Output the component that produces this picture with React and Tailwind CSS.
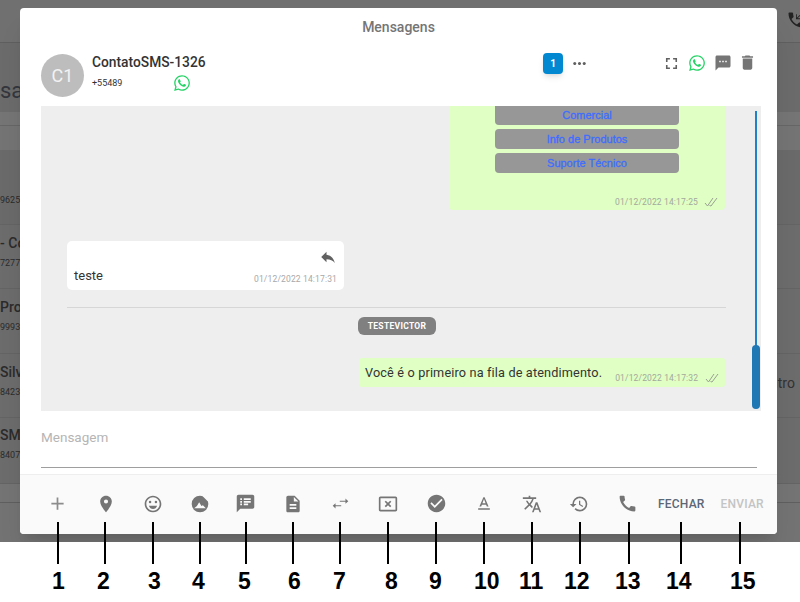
import { FaWhatsapp } from 'react-icons/fa'
import {
  MdAdd, MdLocationOn, MdOutlineEmojiEmotions, MdSpeakerNotes, MdDescription, MdOutlineCancelPresentation,
  MdCheckCircle, MdTextFormat, MdTranslate, MdRestore, MdCall, MdFullscreen, MdMoreHoriz, MdSms, MdDelete, MdReply, MdPhoneCallback,
} from 'react-icons/md'

const font = "font-['Roboto',sans-serif]"

function DriveIcon() {
  return (
    <svg viewBox="0 0 24 24" width="20" height="20">
      <circle cx="12" cy="12" r="10" fill="currentColor" />
      <path d="M5 17h14l-3.5-3.6-1.8 1-2.7-4.4-2.7 4.4z" fill="#fafafa" />
      <path d="M14 1.5 23 10.5V1.5z" fill="#fafafa" />
    </svg>
  )
}

function SwapIcon() {
  return (
    <svg viewBox="0 0 24 24" width="17" height="17" fill="currentColor">
      <path d="M11 8h8V5l4 3.7-4 3.7V9.4h-8zM13 14.6H5v-3L1 15.3 5 19v-3h8z" />
    </svg>
  )
}

function Ticks() {
  return (
    <svg viewBox="0 0 14 10" width="14" height="10" fill="none" stroke="#9aa092" strokeWidth="1" className="shrink-0">
      <path d="M1 6l2.5 3L9 1M5.5 8.5 7 9 13 1" />
    </svg>
  )
}

const tools = [
  { w: 'w-[49px]', icon: <MdAdd size={21} className="text-[#8c8c8c]" /> },
  { w: 'w-[47px]', icon: <MdLocationOn size={20} /> },
  { w: 'w-[48px]', icon: <MdOutlineEmojiEmotions size={20} /> },
  { w: 'w-[46px]', icon: <DriveIcon /> },
  { w: 'w-[45px]', icon: <MdSpeakerNotes size={21} /> },
  { w: 'w-[50px]', icon: <MdDescription size={20} /> },
  { w: 'w-[45px]', icon: <SwapIcon /> },
  { w: 'w-[50px]', icon: <MdOutlineCancelPresentation size={20} /> },
  { w: 'w-[46px]', icon: <MdCheckCircle size={21} /> },
  { w: 'w-[50px]', icon: <MdTextFormat size={20} /> },
  { w: 'w-[46px]', icon: <MdTranslate size={20} /> },
  { w: 'w-[48px]', icon: <MdRestore size={20} /> },
  { w: 'w-[48px]', icon: <MdCall size={21} /> },
]

const marks = [
  { label: '1', line: 'left-[57px]', text: 'left-[52px]' },
  { label: '2', line: 'left-[104px]', text: 'left-[97px]' },
  { label: '3', line: 'left-[152px]', text: 'left-[148px]' },
  { label: '4', line: 'left-[199px]', text: 'left-[192px]' },
  { label: '5', line: 'left-[245px]', text: 'left-[238px]' },
  { label: '6', line: 'left-[292px]', text: 'left-[288px]' },
  { label: '7', line: 'left-[339px]', text: 'left-[333px]' },
  { label: '8', line: 'left-[387px]', text: 'left-[385px]' },
  { label: '9', line: 'left-[435px]', text: 'left-[429px]' },
  { label: '10', line: 'left-[483px]', text: 'left-[474px]' },
  { label: '11', line: 'left-[531px]', text: 'left-[519px]' },
  { label: '12', line: 'left-[579px]', text: 'left-[564px]' },
  { label: '13', line: 'left-[628px]', text: 'left-[615px]' },
  { label: '14', line: 'left-[680px]', text: 'left-[666px]' },
  { label: '15', line: 'left-[739px]', text: 'left-[730px]' },
]

const behind = [
  { top: 'top-[172px]', h: '', s: '96254' },
  { top: 'top-[235px]', h: '- Co', s: '72776' },
  { top: 'top-[299px]', h: 'Pro', s: '99936' },
  { top: 'top-[364px]', h: 'Silv', s: '84237' },
  { top: 'top-[427px]', h: 'SMS', s: '84076' },
]

const bands = [
  { h: 'h-[42px]', c: 'bg-[#707070] border-[#5f5f5f]' },
  { h: 'h-[68px]', c: 'bg-[#6b6b6b] border-[#6b6b6b]' },
  { h: 'h-[13px]', c: 'bg-[#757575] border-[#666666]' },
  { h: 'h-[24px]', c: 'bg-[#747474] border-[#6a6a6a]' },
  { h: 'h-[73px]', c: 'bg-[#6a6a6a] border-[#646464]' },
  { h: 'h-[63px]', c: 'bg-[#6c6c6c] border-[#646464]' },
  { h: 'h-[64px]', c: 'bg-[#6c6c6c] border-[#646464]' },
  { h: 'h-[63px]', c: 'bg-[#6c6c6c] border-[#646464]' },
  { h: 'h-[65px]', c: 'bg-[#6c6c6c] border-[#646464]' },
  { h: 'h-[18px]', c: 'bg-[#747474] border-[#5f5f5f]' },
]

const optionText = "text-[11px] font-['Liberation_Sans',sans-serif] [-webkit-text-stroke:0.3px_#3d6dff] text-[#3d6dff]"

export default function App() {
  return (
    <div className={`relative w-[800px] h-[602px] overflow-hidden bg-white ${font}`}>
      {/* backdrop */}
      <div className="relative h-[542px] bg-[#737373] overflow-hidden">
        {bands.map((b, i) => (
          <div key={i} className={`${b.h} ${b.c} border-b box-content`} />
        ))}
        <div className="absolute top-[74px] left-0 text-[22px] text-[#33363c]">sa</div>
        {behind.map((b) => (
          <div key={b.s} className={`absolute left-0 ${b.top} w-[20px]`}>
            <div className="text-[14px] leading-[16px] font-medium text-[#2b2b2b] whitespace-nowrap h-[16px]">{b.h}</div>
            <div className="text-[9px] leading-[12px] mt-[6px] text-[#2b2b2b] whitespace-nowrap">{b.s}</div>
          </div>
        ))}
        <div className="absolute top-[373px] left-[770px] text-[14px] text-[#333] whitespace-nowrap">ntro</div>
        <MdPhoneCallback size={20} className="absolute top-[10px] left-[786px] text-[#222]" />

        {/* modal */}
        <div className="absolute left-[20px] top-[8px] w-[757px] h-[526px] bg-white rounded-[4px] shadow-xl flex flex-col">
          <div className="h-[38px] shrink-0 pt-[11px] text-center text-[14px] leading-[16px] font-medium text-[#757575]">Mensagens</div>

          <div className="h-[60px] shrink-0 flex items-start pl-[21px]">
            <div className="w-[43px] h-[43px] shrink-0 mt-[8px] rounded-full bg-[#bdbdbd] flex items-center justify-center text-[#f2f2f2] text-[18px]">C1</div>
            <div className="ml-[8px] mt-[7px] w-[140px] shrink-0">
              <div className="text-[13.8px] leading-[18px] font-medium text-[#333] whitespace-nowrap">ContatoSMS-1326</div>
              <div className="flex items-center h-[24px]">
                <span className="mt-[2px] text-[9px] text-[#333] w-[81px] shrink-0">+55489</span>
                <FaWhatsapp size={18} className="shrink-0 text-[#25d366]" />
              </div>
            </div>
            <div className="ml-[311px] mt-[7px] w-[20px] h-[21px] shrink-0 rounded-[4px] bg-[#0288d1] shadow-md text-white text-[10px] font-bold flex items-center justify-center">1</div>
            <MdMoreHoriz size={19} className="shrink-0 ml-[7px] mt-[8px] text-[#616161]" />
            <MdFullscreen size={19} className="shrink-0 ml-[73px] mt-[8px] text-[#616161]" />
            <FaWhatsapp size={18} className="shrink-0 ml-[7px] mt-[8px] text-[#25d366]" />
            <MdSms size={18} className="shrink-0 ml-[8px] mt-[8px] text-[#757575]" />
            <MdDelete size={19} className="shrink-0 ml-[6px] mt-[7px] text-[#757575]" />
          </div>

          {/* messages */}
          <div className="relative shrink-0 mx-[21px] w-[720px] h-[305px] bg-[#eeeeee] overflow-hidden flex flex-col pl-[26px]">
            <div className="ml-[382px] w-[276px] h-[104px] shrink-0 bg-[#dfffc4] rounded-b-[4px] flex flex-col items-center">
              <div className={`w-[184px] h-[19px] shrink-0 rounded-b-[4px] bg-[#979797] ${optionText} flex items-center justify-center`}>Comercial</div>
              <div className={`w-[184px] h-[20px] shrink-0 mt-[4px] rounded-[4px] bg-[#979797] ${optionText} flex items-center justify-center`}>Info de Produtos</div>
              <div className={`w-[184px] h-[20px] shrink-0 mt-[4px] rounded-[4px] bg-[#979797] ${optionText} flex items-center justify-center`}>Suporte Técnico</div>
              <div className="self-end flex items-center mt-[23px] pr-[7px] text-[8.5px] leading-[12px] tracking-[0.15px] text-[#a3a89c]">
                <span>01/12/2022 14:17:25</span>
                <span className="ml-[6px]"><Ticks /></span>
              </div>
            </div>

            <div className="mt-[31px] w-[277px] h-[49px] shrink-0 bg-white rounded-[5px] relative">
              <MdReply size={18} className="absolute right-[7px] top-[7px] text-[#616161]" />
              <span className="absolute left-[7px] top-[27px] text-[13px] leading-[16px] text-[#333]">teste</span>
              <span className="absolute right-[7px] top-[32px] text-[8.5px] leading-[12px] tracking-[0.15px] text-[#a8a8a8]">01/12/2022 14:17:31</span>
            </div>

            <div className="mt-[17px] w-[659px] border-t border-[#d6d6d6]" />
            <div className="mt-[9px] ml-[291px] w-[78px] h-[18px] shrink-0 rounded-[6px] bg-[#808080] text-white text-[8.5px] font-bold tracking-[0.3px] flex items-center justify-center">TESTEVICTOR</div>

            <div className="mt-[23px] ml-[292px] w-[366px] h-[29px] shrink-0 bg-[#dfffc4] rounded-[3px] flex items-end pl-[6px]">
              <span className="mb-[7px] text-[12.7px] leading-[15px] tracking-[0.15px] text-[#333] whitespace-nowrap">Você é o primeiro na fila de atendimento.</span>
              <span className="ml-[13px] mb-[4px] text-[8.5px] leading-[10px] tracking-[0.15px] text-[#a3a89c] whitespace-nowrap">01/12/2022 14:17:32</span>
              <span className="ml-[7px] mb-[4px]"><Ticks /></span>
            </div>

            {/* scrollbar */}
            <div className="absolute left-[714px] top-[5px] w-[2px] h-[295px] bg-[#2080c8]" />
            <div className="absolute left-[711px] top-[239px] w-[8px] h-[64px] rounded-full bg-[#1f77b4]" />
          </div>

          {/* input */}
          <div className="mx-[21px] w-[716px] h-[57px] shrink-0 border-b border-[#9e9e9e] pt-[18px] text-[13.5px] leading-[16px] text-[#b5b5b5]">Mensagem</div>

          {/* toolbar */}
          <div className="mt-[6px] flex-1 bg-[#fafafa] border-t border-[#eeeeee] rounded-b-[4px] flex items-center pl-[13px] pb-[2px] text-[#757575]">
            {tools.map((t, i) => (
              <div key={i} className={`${t.w} h-[24px] shrink-0 flex items-center justify-center`}>{t.icon}</div>
            ))}
            <span className="ml-[7px] text-[12px] font-medium tracking-[0.2px] text-[#5d6675]">FECHAR</span>
            <span className="ml-[16px] text-[12px] font-medium tracking-[0.2px] text-[#c4c4c4]">ENVIAR</span>
          </div>
        </div>
      </div>

      {/* numbered callouts */}
      {marks.map((m) => (
        <div key={m.label}>
          <div className={`absolute ${m.line} top-[522px] w-[2px] h-[42px] bg-black`} />
          <div className={`absolute ${m.text} top-[568px] text-[23px] leading-[26px] font-bold text-black font-['Liberation_Sans',sans-serif]`}>{m.label}</div>
        </div>
      ))}
    </div>
  )
}
